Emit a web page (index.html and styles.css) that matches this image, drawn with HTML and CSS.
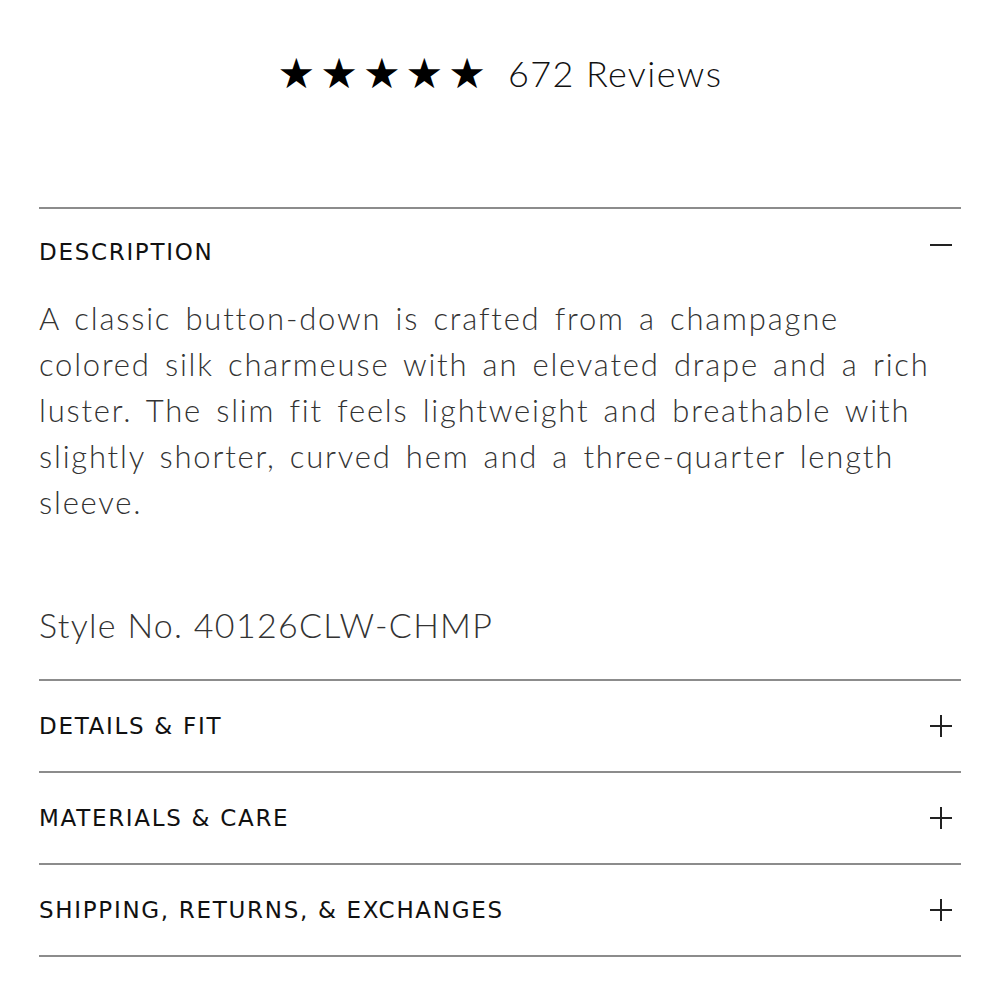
FILE: index.html
```html
<!DOCTYPE html>
<html lang="en">
<head>
    <meta charset="UTF-8">
    <meta name="viewport" content="width=device-width, initial-scale=1.0">
    <title>Silk Button-Down - Product Info</title>
    <link rel="stylesheet" href="styles.css">
</head>
<body>
    <div class="product-info">
        <div class="rating">
            <span class="stars">★★★★★</span>
            <span class="review-count">672 Reviews</span>
        </div>

        <div class="accordion">
            <div class="acc-item open">
                <div class="acc-head">
                    <span class="acc-title">DESCRIPTION</span>
                    <span class="acc-icon minus"></span>
                </div>
                <div class="acc-body">
                    <p class="desc-text">A classic button-down is crafted from a champagne colored silk charmeuse with an elevated drape and a rich luster. The slim fit feels lightweight and breathable with slightly shorter, curved hem and a three-quarter length sleeve.</p>
                    <p class="style-no">Style No. 40126CLW-CHMP</p>
                </div>
            </div>

            <div class="acc-item">
                <div class="acc-head">
                    <span class="acc-title">DETAILS &amp; FIT</span>
                    <span class="acc-icon plus"></span>
                </div>
            </div>

            <div class="acc-item">
                <div class="acc-head">
                    <span class="acc-title">MATERIALS &amp; CARE</span>
                    <span class="acc-icon plus"></span>
                </div>
            </div>

            <div class="acc-item">
                <div class="acc-head">
                    <span class="acc-title">SHIPPING, RETURNS, &amp; EXCHANGES</span>
                    <span class="acc-icon plus"></span>
                </div>
            </div>
        </div>
    </div>
</body>
</html>
```

FILE: styles.css
```css
body {
    margin: 0;
    padding: 0;
    background: #fff;
    font-family: Lato, "Open Sans", sans-serif;
    color: #111;
}

.product-info {
    padding: 0 39px;
}

.rating {
    display: flex;
    justify-content: center;
    align-items: center;
    gap: 17px;
    height: 146px;
}

.stars {
    font-family: "DejaVu Sans", sans-serif;
    font-size: 42px;
    letter-spacing: 5px;
    color: #000;
}

.review-count {
    font-family: Lato, sans-serif;
    font-weight: 300;
    font-size: 36px;
    letter-spacing: 1.4px;
    color: #111;
}

.accordion {
    margin-top: 61px;
    border-bottom: 2px solid #8c8c8c;
}

.acc-item {
    border-top: 2px solid #8c8c8c;
}

.acc-head {
    display: flex;
    justify-content: space-between;
    align-items: center;
    height: 90px;
    padding-right: 9px;
}

.acc-item.open .acc-head {
    height: 86px;
}

.acc-title {
    font-family: "DejaVu Sans", sans-serif;
    font-size: 23px;
    letter-spacing: 1.7px;
    color: #111;
}

.acc-icon {
    position: relative;
    width: 22px;
    height: 22px;
}

.acc-icon::before,
.acc-icon::after {
    content: "";
    position: absolute;
    background: #222;
}

.acc-icon::before {
    left: 0;
    top: 10px;
    width: 22px;
    height: 2px;
}

.acc-icon.plus::after {
    left: 10px;
    top: 0;
    width: 2px;
    height: 22px;
}

.acc-icon.minus {
    top: -7px;
}

.acc-body {
    padding-bottom: 34px;
}

.desc-text {
    margin: 0;
    font-weight: 300;
    font-size: 31px;
    line-height: 46px;
    letter-spacing: 1.8px;
    word-spacing: 4px;
    color: #333;
}

.style-no {
    margin: 79px 0 0;
    font-weight: 300;
    font-size: 34px;
    letter-spacing: 1.3px;
    color: #333;
}
```
